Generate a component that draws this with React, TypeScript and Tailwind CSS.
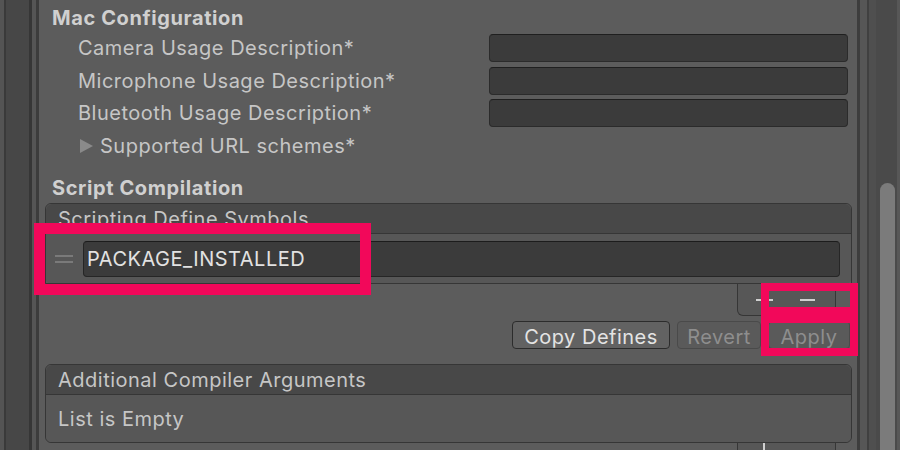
import React from 'react';

const labels = [
  'Camera Usage Description*',
  'Microphone Usage Description*',
  'Bluetooth Usage Description*',
];

export default function App() {
  return (
    <div
      className="relative flex h-[450px] w-[900px] overflow-hidden bg-[#5b5b5b] text-[20px] tracking-[0.5px] text-[#c6c6c6]"
      style={{ fontFamily: 'Inter, "Noto Sans", sans-serif' }}
    >
      {/* Left window edge */}
      <div className="flex h-full w-[39px] shrink-0">
        <div className="w-[4px] bg-[#545454]" />
        <div className="w-[2px] bg-[#3a3a3a]" />
        <div className="w-[23px] bg-[#474747]" />
        <div className="w-[3px] bg-[#363636]" />
        <div className="w-[4px] bg-[#555555]" />
        <div className="w-[3px] bg-[#3c3c3c]" />
      </div>

      {/* Inspector content */}
      <div className="w-[818px] shrink-0 bg-[#5c5c5c] pt-[4px]">
        <div className="flex h-[28px] items-center pl-[13px] font-bold tracking-[0.6px] text-[#d0d0d0]">Mac Configuration</div>

        {labels.map((label) => (
          <div key={label} className="flex h-[32.5px] items-center pl-[39px] pr-[9px]">
            <span className="flex-1">{label}</span>
            <div className="h-[28px] w-[359px] rounded-[4px] border border-[#2b2b2b] border-t-[#1f1f1f] bg-[#3b3b3b]" />
          </div>
        ))}

        <div className="flex h-[32.5px] items-center pl-[41px]">
          <svg width="13" height="14" viewBox="0 0 13 14" className="mr-[7px]">
            <path d="M0 0 L13 7 L0 14 Z" fill="#8a8a8a" />
          </svg>
          <span>Supported URL schemes*</span>
        </div>

        <div className="mt-[12px] flex h-[28px] items-center pl-[13px] font-bold tracking-[0.6px] text-[#d0d0d0]">Script Compilation</div>

        {/* Scripting Define Symbols list */}
        <div className="ml-[6px] mr-[5px] mt-[1px]">
          <div className="rounded-t-[6px] border border-[#363636]">
            <div className="flex h-[30px] items-center rounded-t-[6px] border-b border-[#363636] bg-[#484848] pl-[12px]">
              Scripting Define Symbols
            </div>
            <div className="flex h-[49px] items-center rounded-b-[4px] bg-[#575757] pl-[9px] pr-[11px]">
              <div className="mr-[10px] flex w-[18px] flex-col gap-[4px]">
                <div className="h-[2px] bg-[#7a7a7a]" />
                <div className="h-[2px] bg-[#7a7a7a]" />
              </div>
              <div className="flex h-[36px] flex-1 items-center rounded-[4px] border border-[#262626] border-t-[#1c1c1c] bg-[#3b3b3b] pl-[3px] text-[#e2e2e2]">
                PACKAGE_INSTALLED
              </div>
            </div>
          </div>
          <div className="flex justify-end pr-[16px]">
            <div className="relative flex h-[32px] w-[99px] items-center rounded-bl-[6px] border-x border-b border-[#363636] bg-[#575757] pl-[18px]">
              <div className="relative h-[2px] w-[17px] bg-[#d0d0d0]">
                <div className="absolute left-[7.5px] top-[-7.5px] h-[17px] w-[2px] bg-[#d0d0d0]" />
              </div>
              <div className="ml-[27px] h-[2px] w-[15px] bg-[#d0d0d0]" />
            </div>
          </div>
        </div>

        {/* Define buttons */}
        <div className="mt-[5px] flex justify-end gap-[7px] pr-[7px]">
          <button className="h-[28px] w-[158px] rounded-[4px] border border-[#2c2c2c] bg-[#626262] text-[#e4e4e4]">
            Copy Defines
          </button>
          <button className="h-[28px] w-[84px] rounded-[4px] border border-[#4a4a4a] bg-[#5a5a5a] text-[#8e8e8e]">
            Revert
          </button>
          <button className="h-[28px] w-[82px] rounded-[4px] border border-[#4a4a4a] bg-[#5a5a5a] text-[#8e8e8e]">
            Apply
          </button>
        </div>

        {/* Additional Compiler Arguments list */}
        <div className="ml-[6px] mr-[5px] mt-[15px]">
          <div className="rounded-[6px] border border-[#363636]">
            <div className="flex h-[30px] items-center rounded-t-[6px] border-b border-[#363636] bg-[#484848] pl-[12px]">
              Additional Compiler Arguments
            </div>
            <div className="flex h-[47px] items-center rounded-b-[6px] bg-[#575757] pl-[12px]">List is Empty</div>
          </div>
          <div className="flex justify-end pr-[16px]">
            <div className="relative flex h-[32px] w-[99px] items-start rounded-bl-[6px] border-x border-b border-[#363636] bg-[#575757] pl-[25px]">
              <div className="h-[10px] w-[2px] bg-[#d0d0d0]" />
            </div>
          </div>
        </div>
      </div>

      {/* Right window edge + scrollbar */}
      <div className="flex h-full flex-1">
        <div className="w-[3px] bg-[#3d3d3d]" />
        <div className="w-[7px] bg-[#565656]" />
        <div className="w-[2px] bg-[#404040]" />
        <div className="w-[7px] bg-[#4f4f4f]" />
        <div className="w-[21px] bg-[#4a4a4a] pl-[4px] pt-[183px]">
          <div className="h-full w-[15px] rounded-t-full bg-[#7b7b7b]" />
        </div>
        <div className="flex-1 bg-[#575757]" />
      </div>

      {/* Highlight annotations */}
      <div className="absolute left-[34px] top-[223px] h-[72px] w-[337px] border-[11px] border-[#f2085a]" />
      <div className="absolute left-[761px] top-[283px] h-[32px] w-[97px] border-[8px] border-[#f2085a]" />
      <div className="absolute left-[761px] top-[315px] h-[41px] w-[97px] border-[8px] border-[#f2085a]" />
    </div>
  );
}
